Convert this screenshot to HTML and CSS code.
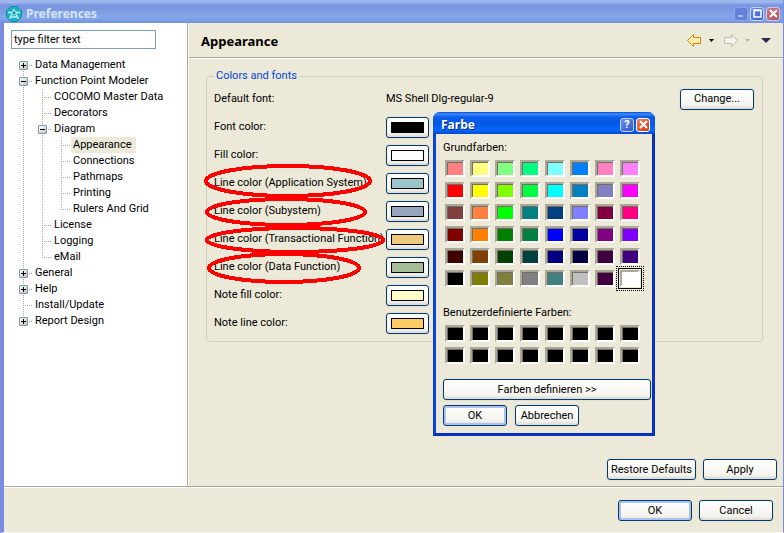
FILE: index.html
```
<!DOCTYPE html>
<html lang="en">
   <head>
      <meta charset="utf-8">
      <title>Preferences</title>
      <meta name="viewport" content="width=device-width, initial-scale=1">
      <link rel="stylesheet" href="styles.css">
   </head>
   <body>
      <div class="window">
         <header class="titlebar">
            <svg class="app-icon" width="16" height="16" viewBox="0 0 16 16">
               <path d="M5 0h6l5 5v6l-5 5H5l-5-5V5z" fill="#0a8c9c"/>
               <path d="M5 1h6l4 4v6l-4 4H5l-4-4V5z" fill="#18b4c2"/>
               <path d="M8 3v2M2 6.500h4M10 6.500h4M6 8l-2.500 5M10 8l2.500 5M5 11h6" fill="none" stroke="#c4f0f4" stroke-width="1.300"/>
               <circle cx="8" cy="7" r="2" fill="#0d8595" stroke="#c4f0f4"/>
            </svg>
            <h1 class="titlebar-text">Preferences</h1>
            <div class="caption-buttons">
               <button class="caption-button faded" aria-label="Minimize"><svg width="9" height="9"><path d="M1 6h5v2H1z" fill="#a9bdf0"/></svg></button>
               <button class="caption-button" aria-label="Maximize"><svg width="9" height="9"><path d="M1 1h7v7H1zM1 1.500h7" fill="none" stroke="#fff" stroke-width="1.500"/></svg></button>
               <button class="caption-button close muted" aria-label="Close"><svg width="9" height="9"><path d="M1 1l7 7M8 1L1 8" stroke="#fff" stroke-width="2"/></svg></button>
            </div>
         </header>

         <div class="content">
            <nav class="sidebar">
               <input class="filter" type="text" value="type filter text" aria-label="Filter">
               <ul class="tree">
                  <li><button class="toggle plus" aria-label="Expand"></button><span class="node">Data Management</span></li>
                  <li><button class="toggle" aria-label="Collapse"></button><span class="node">Function Point Modeler</span>
                     <ul>
                        <li><span class="node">COCOMO Master Data</span></li>
                        <li><span class="node">Decorators</span></li>
                        <li><button class="toggle" aria-label="Collapse"></button><span class="node">Diagram</span>
                           <ul>
                              <li><span class="node selected">Appearance</span></li>
                              <li><span class="node">Connections</span></li>
                              <li><span class="node">Pathmaps</span></li>
                              <li><span class="node">Printing</span></li>
                              <li><span class="node">Rulers And Grid</span></li>
                           </ul>
                        </li>
                        <li><span class="node">License</span></li>
                        <li><span class="node">Logging</span></li>
                        <li><span class="node">eMail</span></li>
                     </ul>
                  </li>
                  <li><button class="toggle plus" aria-label="Expand"></button><span class="node">General</span></li>
                  <li><button class="toggle plus" aria-label="Expand"></button><span class="node">Help</span></li>
                  <li><span class="node">Install/Update</span></li>
                  <li><button class="toggle plus" aria-label="Expand"></button><span class="node">Report Design</span></li>
               </ul>
            </nav>

            <main class="page">
               <div class="page-header">
                  <h2>Appearance</h2>
                  <div class="history">
                     <button class="tool" aria-label="Back"><svg width="15" height="13"><path d="M.5 6.5l6-6v3h7v6h-7v3z" fill="#fdeeb0" stroke="#c8860a"/></svg></button>
                     <button class="tool" aria-label="Back history"><svg width="5" height="3"><path d="M0 0h5L2.500 3z"/></svg></button>
                     <button class="tool forward" aria-label="Forward"><svg width="15" height="13"><path d="M14.500 6.500l-6-6v3h-7v6h7v3z" fill="#f4f2ea" stroke="#bdbbb0"/></svg></button>
                     <button class="tool" aria-label="Forward history"><svg width="5" height="3"><path d="M0 0h5L2.500 3z" fill="#b5b3a6"/></svg></button>
                     <button class="tool menu" aria-label="Menu"><svg width="10" height="5"><path d="M0 0h10L5 5z" fill="#2b2850"/></svg></button>
                  </div>
               </div>

               <div class="page-body">
                  <fieldset class="group">
                     <legend>Colors and fonts</legend>
                     <div class="row"><span>Default font:</span><span>MS Shell Dlg-regular-9</span><button class="btn">Change...</button></div>
                     <div class="row"><label for="font-color">Font color:</label><button class="btn color-btn" id="font-color"><i class="chip black"></i></button></div>
                     <div class="row"><label for="fill-color">Fill color:</label><button class="btn color-btn" id="fill-color"><i class="chip white"></i></button></div>
                     <div class="row"><label for="app-color">Line color (Application System)</label><button class="btn color-btn" id="app-color"><i class="chip teal"></i></button></div>
                     <div class="row"><label for="sub-color">Line color (Subystem)</label><button class="btn color-btn" id="sub-color"><i class="chip slate"></i></button></div>
                     <div class="row"><label for="trans-color">Line color (Transactional Function)</label><button class="btn color-btn" id="trans-color"><i class="chip sand"></i></button></div>
                     <div class="row"><label for="data-color">Line color (Data Function)</label><button class="btn color-btn" id="data-color"><i class="chip sage"></i></button></div>
                     <div class="row"><label for="note-fill">Note fill color:</label><button class="btn color-btn" id="note-fill"><i class="chip cream"></i></button></div>
                     <div class="row"><label for="note-line">Note line color:</label><button class="btn color-btn" id="note-line"><i class="chip orange"></i></button></div>
                     <!-- red marker rings round the line colours -->
                     <svg class="marks" width="190" height="130" viewBox="200 160 190 130">
                        <ellipse cx="288" cy="181" rx="82" ry="15"/>
                        <ellipse cx="286" cy="212" rx="79" ry="13"/>
                        <ellipse cx="295" cy="240" rx="88" ry="12"/>
                        <ellipse cx="284" cy="268" rx="75" ry="14"/>
                     </svg>
                  </fieldset>
                  <div class="page-actions">
                     <button class="btn wide">Restore Defaults</button>
                     <button class="btn">Apply</button>
                  </div>
               </div>
            </main>
         </div>

         <footer class="footer">
            <button class="btn default">OK</button>
            <button class="btn">Cancel</button>
         </footer>
      </div>

      <div class="dialog" role="dialog" aria-labelledby="dialog-title">
         <div class="dialog-title">
            <h2 id="dialog-title">Farbe</h2>
            <div class="caption-buttons">
               <button class="caption-button help" aria-label="Help">?</button>
               <button class="caption-button close" aria-label="Close"><svg width="9" height="9"><path d="M1 1l7 7M8 1L1 8" stroke="#fff" stroke-width="2"/></svg></button>
            </div>
         </div>
         <div class="dialog-body">
            <div class="palette-label">Grundfarben:</div>
            <div class="palette" id="basic"></div>
            <div class="palette-label custom">Benutzerdefinierte Farben:</div>
            <div class="palette" id="custom"></div>
            <button class="btn define">Farben definieren &gt;&gt;</button>
            <div class="dialog-actions">
               <button class="btn default">OK</button>
               <button class="btn">Abbrechen</button>
            </div>
         </div>
      </div>

      <script src="palette.js"></script>
   </body>
</html>
```
FILE: styles.css
```
* {
   box-sizing: border-box;
}

body {
   margin: 0;
   background: #ece9d8;
   font-family: Roboto, "Liberation Sans", sans-serif;
   font-size: 11px;
   line-height: 16px;
   color: #000;
}

h1, h2 {
   margin: 0;
   font-family: "Noto Sans", sans-serif;
   font-weight: bold;
}

button, input {
   font: inherit;
   color: inherit;
}

.window {
   display: flex;
   flex-direction: column;
   min-height: 100vh;
   border: solid #7b8be0;
   border-width: 0 1px 1px 4px;
   border-bottom-color: #f8f7f0;
}

/* title bar */
.titlebar {
   display: flex;
   align-items: center;
   height: 23px;
   margin-left: -4px;
   padding: 4px 3px 0 6px;
   background: linear-gradient(#9db6ea 0, #a0b9ee 2px, #7b96e0 5px, #7b97e0 9px, #83a8ea 17px, #7f9fe8 20px, #7490dc 23px);
}

.titlebar-text {
   flex: 1;
   margin-left: 4px;
   font-size: 12px;
   color: #d8e4f8;
}

.caption-buttons {
   display: flex;
   gap: 2px;
}

.caption-button {
   display: flex;
   align-items: center;
   justify-content: center;
   width: 14px;
   height: 14px;
   padding: 0;
   border: 1px solid #c5d3f5;
   border-radius: 3px;
   background: linear-gradient(135deg, #6d8fea, #3059d0);
   color: #fff;
}

.caption-button.faded {
   border-color: #8ba2e6;
   background: #6480da;
}

.caption-button.close {
   border-color: #fff;
   background: linear-gradient(135deg, #f08060, #d03a12);
}

.caption-button.muted {
   border-color: #d3c8e0;
   background: linear-gradient(135deg, #c98088, #a94f5e);
}

.content {
   display: flex;
   flex: 1;
}

/* tree */
.sidebar {
   width: 184px;
   padding: 7px;
   background: #fff;
   border-right: 1px solid #aca899;
}

.filter {
   display: block;
   width: 145px;
   height: 19px;
   padding: 0 2px;
   border: 1px solid #7f9db9;
   background: #fff;
   outline: none;
}

.tree, .tree ul {
   margin: 0;
   padding: 0;
   list-style: none;
}

.tree {
   margin-top: 8px;
   padding-left: 8px;
}

.tree li {
   position: relative;
   padding-left: 14px;
}

.tree ul {
   padding-left: 5px;
}

.node {
   display: inline-block;
   height: 16px;
   padding: 0 2px;
   vertical-align: top;
}

.selected {
   background: #ece9d8;
   padding-right: 4px;
}

.tree li::before {
   content: "";
   position: absolute;
   top: 0;
   bottom: 0;
   left: 4px;
   width: 1px;
   background: repeating-linear-gradient(#aca899 0 1px, transparent 1px 2px);
}

.tree > li:first-child::before {
   top: 8px;
}

.tree li:last-child::before {
   bottom: auto;
   height: 8px;
}

.tree li::after {
   content: "";
   position: absolute;
   top: 8px;
   left: 4px;
   width: 9px;
   height: 1px;
   background: repeating-linear-gradient(90deg, #aca899 0 1px, transparent 1px 2px);
}

.toggle {
   position: absolute;
   z-index: 1;
   top: 4px;
   left: 0;
   width: 9px;
   height: 9px;
   padding: 0;
   border: 1px solid #7898b5;
   border-radius: 1px;
   background:
      linear-gradient(#000, #000) center / 5px 1px no-repeat,
      linear-gradient(135deg, #fff, #c8c0b0);
}

.toggle.plus {
   background:
      linear-gradient(#000, #000) center / 5px 1px no-repeat,
      linear-gradient(#000, #000) center / 1px 5px no-repeat,
      linear-gradient(135deg, #fff, #c8c0b0);
}

/* page */
.page {
   display: flex;
   flex: 1;
   flex-direction: column;
   border-left: 1px solid #fff;
}

.page-header {
   display: flex;
   align-items: center;
   justify-content: space-between;
   height: 35px;
   padding: 1px 12px 0;
   border-bottom: 1px solid #aca899;
   box-shadow: 0 1px #fff;
}

.page-header h2 {
   font-size: 13px;
}

.history {
   display: flex;
   align-items: center;
   gap: 7px;
}

.tool {
   display: flex;
   padding: 0;
   border: 0;
   background: none;
}

.tool.forward {
   margin-left: 2px;
}

.tool.menu {
   margin-left: 4px;
}

.page-body {
   display: flex;
   flex: 1;
   flex-direction: column;
   justify-content: space-between;
   padding: 10px 6px 6px 17px;
}

.group {
   position: relative;
   margin: 0 14px 0 0;
   padding: 1px 8px 4px 7px;
   border: 1px solid #d0d0bf;
   border-radius: 4px;
}

.group legend {
   padding: 0 2px;
   color: #0046d5;
}

.row {
   display: grid;
   grid-template-columns: 172px 1fr auto;
   align-items: center;
   height: 28px;
   white-space: nowrap;
}

.btn {
   min-width: 74px;
   height: 21px;
   padding: 0 4px;
   border: 1px solid #003c74;
   border-radius: 3px;
   background: linear-gradient(#fff, #f4f3ee 80%, #dcd8ce);
   box-shadow: 0 0 0 1px #e4e1d0;
   line-height: 18px;
   white-space: nowrap;
}

.btn.default {
   box-shadow: inset 0 0 0 2px #a9c2f2;
}

.btn.wide {
   min-width: 89px;
   padding: 0;
}

.color-btn {
   display: flex;
   align-items: center;
   justify-content: center;
   width: 43px;
   min-width: 0;
   padding: 0;
}

.chip {
   width: 33px;
   height: 11px;
   border: 1px solid #000;
}

.black { background: #000; }
.white { background: #fff; }
.teal { background: #9cc5ca; }
.slate { background: #98a5be; }
.sand { background: #efc97c; }
.sage { background: #a5bd94; }
.cream { background: #ffffcc; }
.orange { background: #ffcc66; }

.marks {
   position: absolute;
   left: -7px;
   top: 76px;
   fill: none;
   stroke: #f00;
   stroke-width: 4px;
   shape-rendering: crispEdges;
   pointer-events: none;
}

.page-actions {
   display: flex;
   justify-content: flex-end;
   gap: 7px;
}

.footer {
   display: flex;
   justify-content: flex-end;
   gap: 7px;
   padding: 13px 10px 11px;
   border-top: 1px solid #aca899;
   box-shadow: inset 0 1px #fff;
}

/* colour dialog floating over the page */
.dialog {
   position: absolute;
   left: 433px;
   top: 112px;
   width: 222px;
   border: 3px solid #0842d6;
   border-top: 0;
   border-right-color: #0831c0;
   border-bottom-color: #0831c0;
   border-radius: 7px 7px 0 0;
   background: #ece9d8;
}

.dialog-title {
   display: flex;
   align-items: center;
   justify-content: space-between;
   height: 22px;
   margin: 0 -3px;
   padding: 3px 5px 0 8px;
   border-radius: 7px 7px 0 0;
   background: linear-gradient(#0a4ad0 0, #3c8cff 2px, #0a5ce8 5px, #0458e6 12px, #0668fa 18px, #0448cc 22px);
   color: #fff;
}

.dialog-title h2 {
   font-size: 12px;
   text-shadow: 1px 1px #0a2a80;
}

.help {
   font-weight: bold;
   line-height: 12px;
}

.dialog-body {
   padding: 6px 1px 7px 7px;
}

.palette {
   display: grid;
   grid-template-columns: repeat(8, 20px);
   gap: 5px;
   padding: 4px 2px 0;
}

.palette-label.custom {
   margin-top: 18px;
}

.swatch {
   height: 17px;
   padding: 0;
   border: 2px solid;
   border-color: #aca899 #fff #fff #aca899;
   box-shadow: inset 1px 1px #716f64;
}

.swatch.current {
   outline: 1px dotted #000;
   outline-offset: 3px;
   box-shadow: 0 0 0 1px #ece9d8, 0 0 0 2px #000;
}

.define {
   display: block;
   width: 208px;
   margin-top: 15px;
}

.dialog-actions {
   display: flex;
   gap: 8px;
   margin-top: 5px;
}

.dialog-actions .btn {
   min-width: 64px;
}
```
FILE: palette.js
```
const BASIC = [
   '#ff8080', '#ffff80', '#80ff80', '#00ff80', '#80ffff', '#0080ff', '#ff80c0', '#ff80ff',
   '#ff0000', '#ffff00', '#80ff00', '#00ff40', '#00ffff', '#0080c0', '#8080c0', '#ff00ff',
   '#804040', '#ff8040', '#00ff00', '#008080', '#004080', '#8080ff', '#800040', '#ff0080',
   '#800000', '#ff8000', '#008000', '#008040', '#0000ff', '#0000a0', '#800080', '#8000ff',
   '#400000', '#804000', '#004000', '#004040', '#000080', '#000040', '#400040', '#400080',
   '#000000', '#808000', '#808040', '#808080', '#408080', '#c0c0c0', '#400040', '#ffffff'
];

function fillPalette(id, colors) {
   const palette = document.getElementById(id);
   colors.forEach(color => {
      const swatch = document.createElement('button');
      swatch.classList.add('swatch');
      swatch.style.backgroundColor = color;
      swatch.setAttribute('aria-label', color);
      palette.appendChild(swatch);
   });
}

fillPalette('basic', BASIC);
fillPalette('custom', Array(16).fill('#000000'));
document.getElementById('basic').lastElementChild.classList.add('current');
```
